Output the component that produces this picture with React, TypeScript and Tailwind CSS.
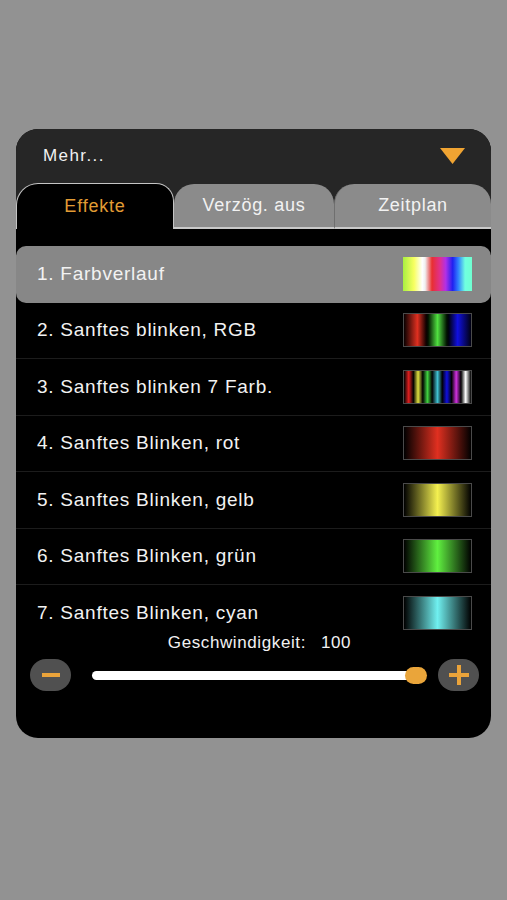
import React from "react";

/* ── Effekt-Liste ─────────────────────────────────────── */
const EFFECTS = [
  {
    label: "1. Farbverlauf",
    swatch:
      "bg-[linear-gradient(to_right,#a8f040_0%,#f8ff60_16%,#ffffff_28%,#f0f0f0_32%,#e83030_42%,#e03090_54%,#b030e8_62%,#2020f0_72%,#3080ff_80%,#70ffe0_90%,#70ffd0_100%)]",
    border: false,
  },
  {
    label: "2. Sanftes blinken, RGB",
    swatch:
      "bg-[linear-gradient(to_right,#080000_0%,#e03020_20%,#100000_33%,#001000_36%,#50e040_50%,#001000_64%,#000010_67%,#1010e0_80%,#000010_100%)]",
    border: true,
  },
  {
    label: "3. Sanftes blinken 7 Farb.",
    swatch:
      "bg-[linear-gradient(to_right,#000_0%,#e02020_7%,#000_14%,#e0e040_21%,#000_28%,#40d040_35%,#000_42%,#40c0d0_50%,#000_57%,#1010e0_64%,#000_71%,#d030e0_78%,#000_85%,#ffffff_92%,#000_100%)]",
    border: true,
  },
  {
    label: "4. Sanftes Blinken, rot",
    swatch: "bg-[linear-gradient(to_right,#000_0%,#e03020_50%,#000_100%)]",
    border: true,
  },
  {
    label: "5. Sanftes Blinken, gelb",
    swatch: "bg-[linear-gradient(to_right,#000_0%,#f4f050_50%,#000_100%)]",
    border: true,
  },
  {
    label: "6. Sanftes Blinken, grün",
    swatch: "bg-[linear-gradient(to_right,#000_0%,#60f040_50%,#000_100%)]",
    border: true,
  },
  {
    label: "7. Sanftes Blinken, cyan",
    swatch: "bg-[linear-gradient(to_right,#000_0%,#70f0f0_50%,#000_100%)]",
    border: true,
  },
];

const FONT = "font-['Liberation_Sans',Arial,sans-serif]";

/* ── Komponente ───────────────────────────────────────── */
export default function App() {
  return (
    <div className={`w-[507px] h-[900px] bg-[#929292] pt-[129px] px-[16px] ${FONT}`}>
      <div className="w-[475px] h-[609px] rounded-[22px] overflow-hidden bg-black flex flex-col">

        {/* Kopfzeile */}
        <div className="h-[54px] bg-[#262626] flex items-center justify-between pl-[27px] pr-[26px]">
          <span className="text-[#f2f2f2] text-[17px] tracking-[1.4px]">Mehr...</span>
          <svg width="25" height="16" viewBox="0 0 25 16">
            <path d="M0 0 H25 L12.5 16 Z" fill="#f0a432" />
          </svg>
        </div>

        {/* Tabs */}
        <div className="h-[46px] bg-[#262626] flex items-end">
          <div className="w-[158px] h-[46px] bg-black rounded-tl-[22px] rounded-tr-[18px] border-t-[1.5px] border-l-[1.5px] border-r-[1.5px] border-[#c4c4c4] flex items-center justify-center">
            <span className="text-[#e29c34] text-[18px] tracking-[0.8px]">Effekte</span>
          </div>
          <div className="w-[160px] h-[45px] bg-[#8b8b8b] rounded-t-[20px] border-b-2 border-[#c9c9c9] flex items-center justify-center">
            <span className="text-[#f2f2f2] text-[18px] tracking-[0.7px]">Verzög. aus</span>
          </div>
          <div className="flex-1 h-[45px] bg-[#8b8b8b] rounded-t-[20px] border-b-2 border-l border-l-[#6f6f6f] border-b-[#c9c9c9] flex items-center justify-center">
            <span className="text-[#f2f2f2] text-[18px] tracking-[0.7px]">Zeitplan</span>
          </div>
        </div>

        {/* Liste */}
        <div className="h-[404px] overflow-hidden pt-[17px]">
          {EFFECTS.map((e, i) => (
            <div
              key={i}
              className={
                i === 0
                  ? "h-[56.5px] bg-[#878787] rounded-[10px] flex items-center justify-between pl-[21px] pr-[19px]"
                  : "h-[56.5px] border-b border-[#1c1c1c] flex items-center justify-between pl-[21px] pr-[19px]"
              }
            >
              <span className="text-[#f2f2f2] text-[19px] tracking-[0.75px]">{e.label}</span>
              <div
                className={`w-[69px] h-[34px] ${e.swatch} ${e.border ? "border border-[#4a4a4a]" : ""}`}
              />
            </div>
          ))}
        </div>

        {/* Geschwindigkeit */}
        <div className="h-[20px] flex items-center justify-center gap-[15px] pl-[12px] text-[#f2f2f2] text-[17px] tracking-[0.6px]">
          <span>Geschwindigkeit:</span>
          <span>100</span>
        </div>

        {/* Regler */}
        <div className="mt-[6px] h-[32px] flex items-center pl-[14px]">
          <div className="w-[41px] h-[32px] rounded-full bg-[#505050] flex items-center justify-center">
            <div className="w-[18px] h-[4px] bg-[#eaa33a]" />
          </div>
          <div className="relative ml-[21px] w-[335px] h-[17px] flex items-center">
            <div className="w-[330px] h-[9px] rounded-full bg-white" />
            <div className="absolute right-0 top-0 w-[22px] h-[17px] rounded-full bg-[#eaa53a]" />
          </div>
          <div className="ml-[11px] w-[41px] h-[32px] rounded-full bg-[#505050] flex items-center justify-center">
            <svg width="20" height="20" viewBox="0 0 20 20">
              <path d="M8 0 H12 V8 H20 V12 H12 V20 H8 V12 H0 V8 H8 Z" fill="#eaa33a" />
            </svg>
          </div>
        </div>
      </div>
    </div>
  );
}
